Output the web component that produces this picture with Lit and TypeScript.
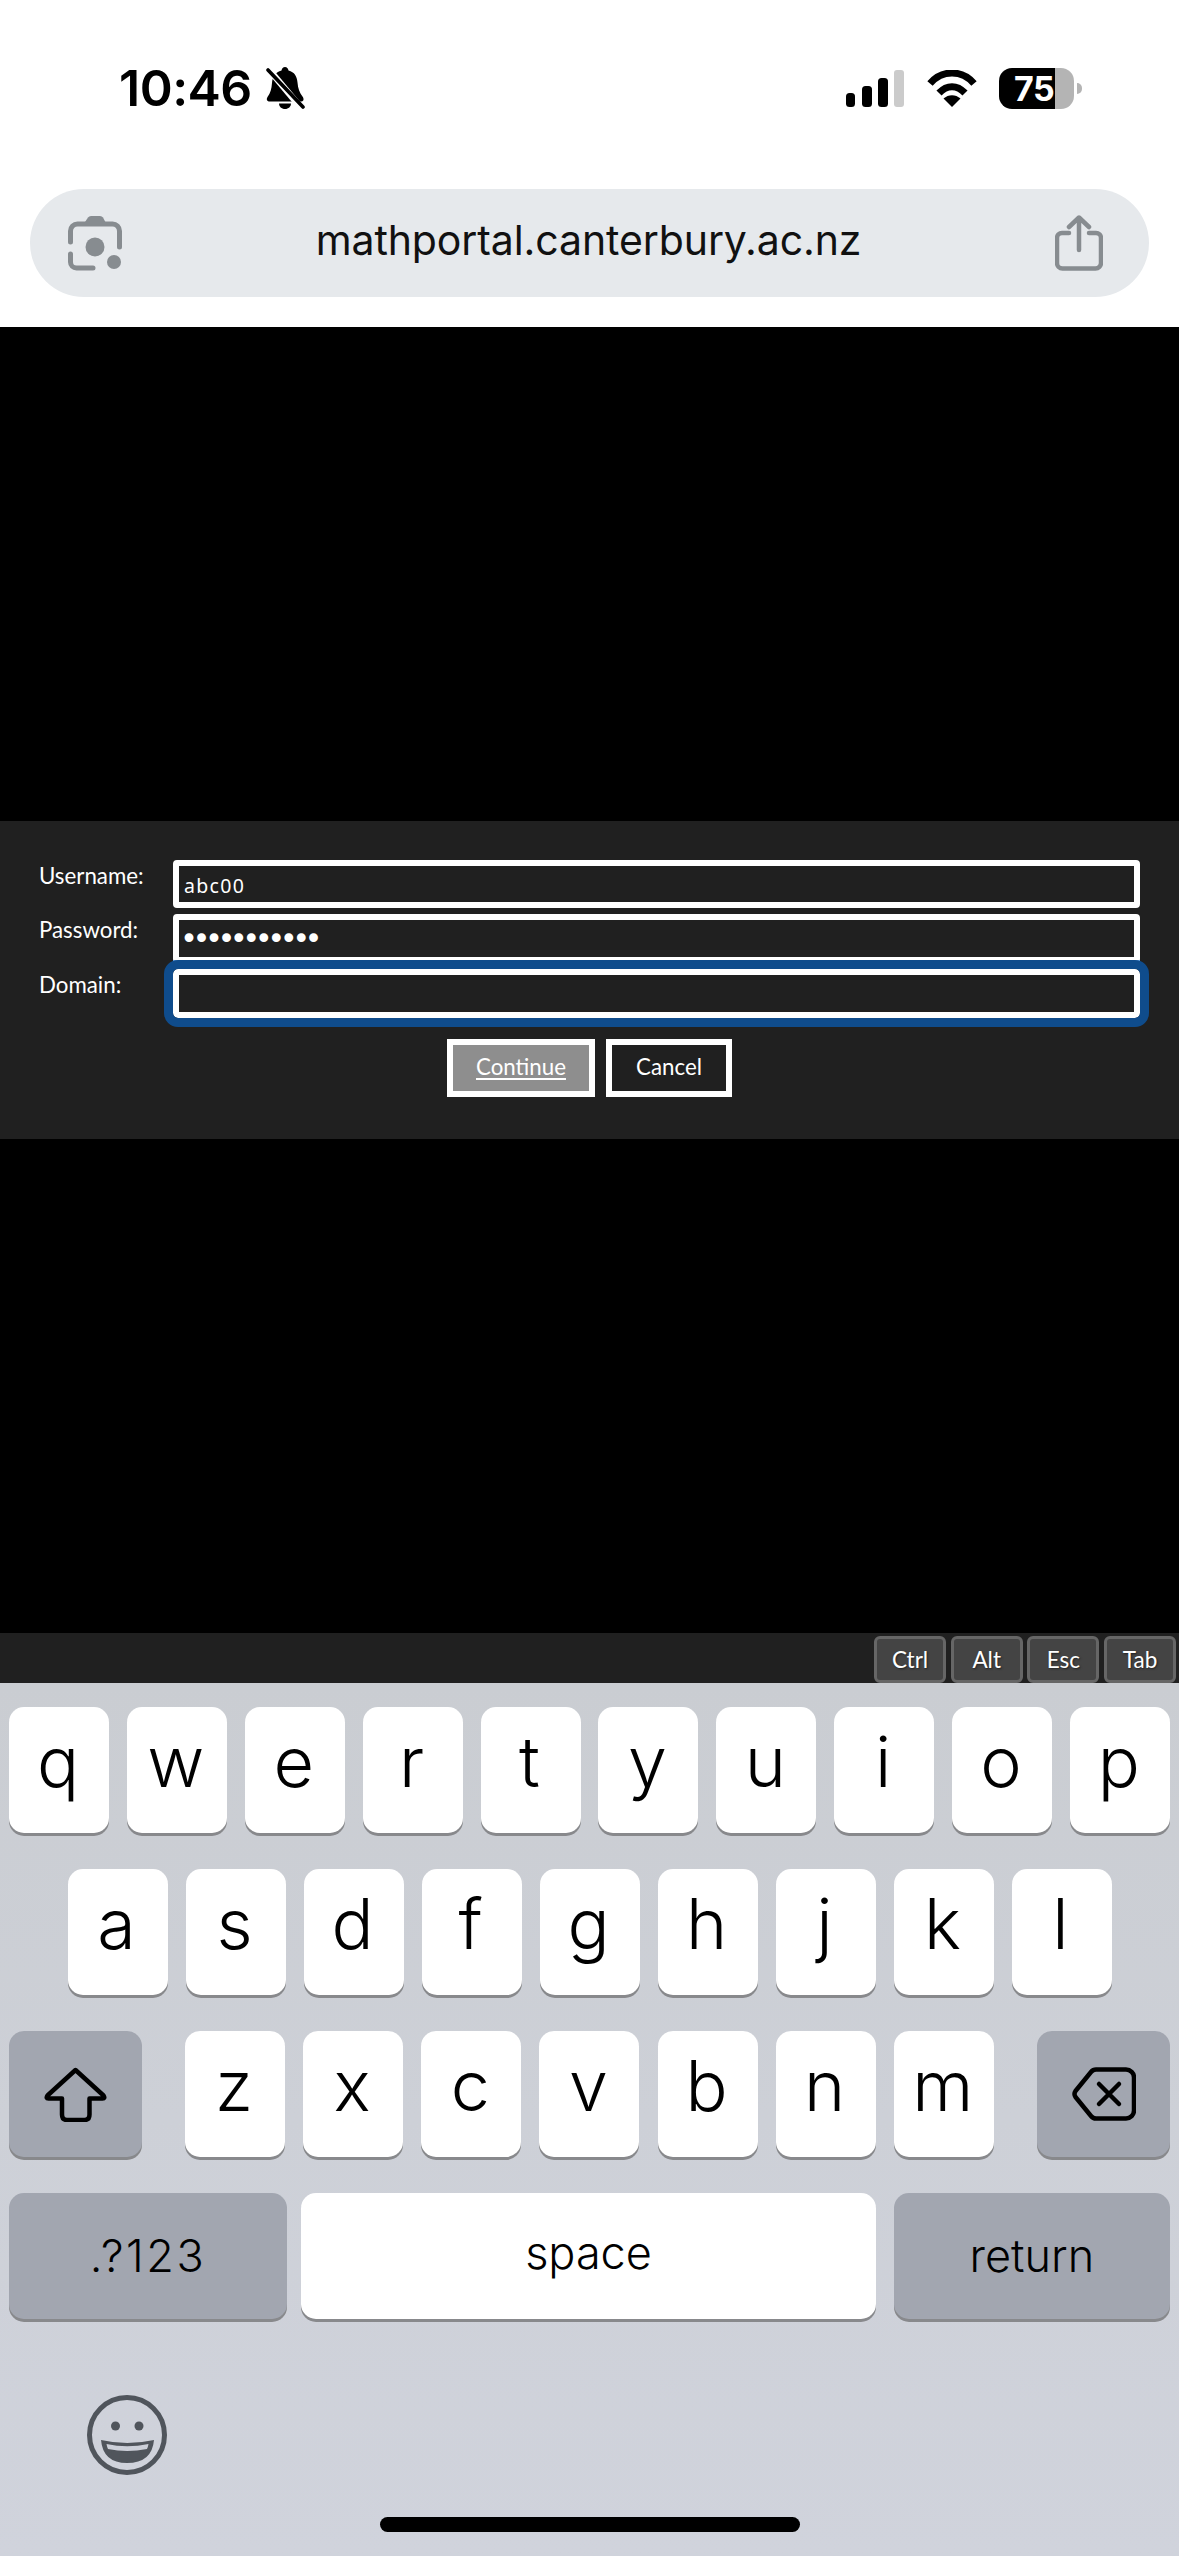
import { LitElement, html, css } from "lit";
import { customElement } from "lit/decorators.js";

const rows = ["qwertyuiop", "asdfghjkl", "zxcvbnm"];

@customElement("app-root")
export class AppRoot extends LitElement {
  static styles = css`
    :host { display: block; width: 1179px; height: 2556px; overflow: hidden; font-family: Inter, "Liberation Sans", sans-serif; background: #fff; }
    * { box-sizing: border-box; }
    .page { display: flex; flex-direction: column; height: 2556px; }
    svg { display: block; flex: none; }

    .top { height: 327px; flex: none; background: #fff; padding-top: 65px; }
    .status { height: 46px; display: flex; align-items: center; padding: 0 97px 0 119px; }
    .time { font-size: 50px; font-weight: 600; line-height: 46px; color: #000; letter-spacing: -0.5px; margin-right: 14px; }
    .bell { width: 39px; height: 42px; }
    .spacer { flex: 1; }
    .signal { width: 58px; height: 37px; margin-right: 23px; }
    .wifi { width: 50px; height: 37px; margin-right: 22px; }
    .battery { width: 75px; height: 41px; border-radius: 13px; background: linear-gradient(90deg, #000 56px, #b4b4b4 56px); color: #fff; font-size: 34px; font-weight: 700; line-height: 41px; padding-left: 15px; letter-spacing: -0.5px; }
    .nub { width: 5px; height: 11px; margin-left: 3px; background: #b4b4b4; border-radius: 0 6px 6px 0; }

    .url { margin: 78px 30px 0; height: 108px; border-radius: 54px; background: #e6e9ec; display: flex; align-items: center; padding: 0 46px 0 38px; }
    .lens { width: 54px; height: 55px; }
    .share { width: 48px; height: 56px; }
    .addr { flex: 1; text-align: center; font-size: 41px; letter-spacing: -0.1px; color: #111; padding-bottom: 6px; }

    .stage { flex: 1; background: #000; display: flex; align-items: center; }
    .panel { width: 100%; height: 318px; background: #202020; padding: 39px 39px 0 39px; color: #fff; font-family: Lato, "Open Sans", sans-serif; }
    .form { display: grid; grid-template-columns: 134px 1fr; row-gap: 6px; }
    .label { font-size: 22.3px; line-height: 32px; color: #fff; }
    .input { height: 49px; border: 6px solid #fff; border-radius: 4px; background: #202020; position: relative; }
    .input.first { height: 48px; }
    .input.under::after { content: ""; position: absolute; left: -6px; right: -6px; bottom: -6px; height: 3px; background: #7ab8f8; }
    .input.focus { outline: 9px solid #0f4c8c; outline-offset: 0; border-radius: 5px; }
    .value { display: block; font-family: "Noto Sans", sans-serif; font-size: 19.5px; letter-spacing: 1.3px; line-height: 39px; padding-left: 5px; color: #fff; }
    .dots { display: block; font-family: "DejaVu Sans Mono", monospace; font-size: 30px; letter-spacing: -5.6px; line-height: 37px; padding-left: 1px; color: #fff; white-space: nowrap; }
    .buttons { display: flex; justify-content: center; gap: 11px; margin-top: 21px; }
    .btn { height: 58px; border: 6px solid #fff; display: flex; align-items: center; justify-content: center; font-size: 22.3px; color: #fff; background: #202020; width: 126px; padding-bottom: 3px; }
    .btn.primary { width: 148px; background: #8e8e8e; text-decoration: underline; text-underline-offset: 3px; }

    .tools { height: 50px; flex: none; background: #202020; display: flex; justify-content: flex-end; align-items: flex-end; gap: 4.67px; padding-right: 3px; font-family: Lato, "Open Sans", sans-serif; }
    .tool { width: 72px; height: 47px; border: 3px solid #666; border-radius: 6px; background: #444; color: #fff; font-size: 22.5px; display: flex; align-items: center; justify-content: center; text-shadow: 1px 1px 2px #222; }

    .kb { height: 873px; flex: none; background: linear-gradient(180deg, #cacdd2, #d0d3dc); padding: 24px 9px 0 9px; position: relative; }
    .row { display: flex; gap: 17.89px; height: 126px; margin-bottom: 36px; }
    .row.mid { justify-content: center; gap: 18px; }
    .row.third { gap: 43px; }
    .group { display: flex; gap: 18.15px; }
    .key { width: 100px; height: 126px; flex: none; border-radius: 15px; background: #fff; box-shadow: 0 3px 0 #88898c; color: #000; display: flex; align-items: center; justify-content: center; font-size: 70px; font-weight: 320; padding: 0 2px 17px 0; }
    .key.fn { background: #a2a6b0; width: 133px; padding: 0; }
    .key.del-key { margin-left: auto; }
    .key.wide { font-size: 45px; width: 278px; font-weight: 320; letter-spacing: 2.5px; padding-bottom: 2px; }
    .key.space { background: #fff; width: 575px; font-size: 45px; font-weight: 320; padding: 0 0 8px; margin-left: -3.89px; }
    .key.ret { width: 276px; font-weight: 340; font-size: 45px; padding-bottom: 2px; }
    .shift { width: 63px; height: 55px; }
    .del { width: 64px; height: 54px; }
    .emoji { width: 80px; height: 80px; position: absolute; left: 87px; top: 712px; }
    .home { position: absolute; left: 380px; top: 834px; width: 420px; height: 15px; border-radius: 8px; background: #000; }
  `;

  render() {
    return html`
      <div class="page">
        <div class="top">
          <div class="status">
            <span class="time">10:46</span>
            <svg class="bell" viewBox="0 0 39 42">
              <path fill="#000" d="M19 0c2 0 3 1.500 3.500 3.500 6 1.500 8.500 6 9 12 .5 6 2 10 5 14 2 3 1 5-2 5H4c-3 0-4-2-2.500-4.500 3-4 4-8 4.500-14C6.500 10 9.500 5 15.500 3.500 16 1.500 17 0 19 0z"/>
              <path fill="#000" d="M13 36.500h12c0 3-2.500 5.500-6 5.500s-6-2.500-6-5.500z"/>
              <path stroke="#fff" stroke-width="6.500" d="M0 -1L36 42"/>
              <path stroke="#000" stroke-width="3.600" stroke-linecap="round" d="M2 3L37 40"/>
            </svg>
            <span class="spacer"></span>
            <svg class="signal" viewBox="0 0 58 37">
              <rect x="0" y="23" width="9" height="14" rx="3.500" fill="#000"/>
              <rect x="16" y="16" width="10" height="21" rx="3.500" fill="#000"/>
              <rect x="32" y="8" width="10" height="29" rx="3.500" fill="#000"/>
              <rect x="48" y="0" width="10" height="37" rx="3" fill="#cbcbcb"/>
            </svg>
            <svg class="wifi" viewBox="0 0 50 37">
              <path fill="none" stroke="#000" stroke-width="7" d="M3 13.500C15-.5 35-.5 47 13.500"/>
              <path fill="none" stroke="#000" stroke-width="7" d="M12 23C20 14.500 30 14.500 38 23"/>
              <path fill="#000" d="M25 37L16.500 28.500C21.500 24 28.500 24 33.500 28.500z"/>
            </svg>
            <div class="battery">75</div>
            <div class="nub"></div>
          </div>
          <div class="url">
            <svg class="lens" viewBox="0 0 54 55">
              <path fill="none" stroke="#878c90" stroke-width="5" stroke-linecap="round" d="M2.500 26V15a7 7 0 0 1 7-7H44.500a7 7 0 0 1 7 7V31"/>
              <path fill="#878c90" d="M15 9L20 1.500Q21 0 23 0H32Q34 0 35 1.500L39 9z"/>
              <path fill="none" stroke="#878c90" stroke-width="5" stroke-linecap="round" d="M2.500 38V46a6 6 0 0 0 6 6H25"/>
              <circle cx="27" cy="31" r="9.500" fill="#878c90"/>
              <circle cx="46" cy="46" r="7" fill="#878c90"/>
            </svg>
            <div class="addr">mathportal.canterbury.ac.nz</div>
            <svg class="share" viewBox="0 0 48 56">
              <path fill="none" stroke="#878c90" stroke-width="4.500" stroke-linecap="round" d="M14 18H7a5 5 0 0 0-5 5V48a5.500 5.500 0 0 0 5.500 5.500H40.500A5.500 5.500 0 0 0 46 48V23a5 5 0 0 0-5-5H34"/>
              <path fill="none" stroke="#878c90" stroke-width="4.500" stroke-linecap="round" stroke-linejoin="round" d="M24 35V3M14 12L24 2.500L34 12"/>
            </svg>
          </div>
        </div>

        <div class="stage">
          <div class="panel">
            <div class="form">
              <div class="label">Username:</div>
              <div class="input first"><span class="value">abc00</span></div>
              <div class="label">Password:</div>
              <div class="input under"><span class="dots">•••••••••••</span></div>
              <div class="label">Domain:</div>
              <div class="input focus"></div>
            </div>
            <div class="buttons">
              <div class="btn primary">Continue</div>
              <div class="btn">Cancel</div>
            </div>
          </div>
        </div>

        <div class="tools">
          ${["Ctrl", "Alt", "Esc", "Tab"].map((t) => html`<div class="tool">${t}</div>`)}
        </div>

        <div class="kb">
          <div class="row">${[...rows[0]].map((k) => html`<div class="key">${k}</div>`)}</div>
          <div class="row mid">${[...rows[1]].map((k) => html`<div class="key">${k}</div>`)}</div>
          <div class="row third">
            <div class="key fn">
              <svg class="shift" viewBox="0 0 63 55">
                <path fill="none" stroke="#000" stroke-width="4.500" stroke-linejoin="round" d="M31.500 3L3.500 28.500Q1.500 31.500 4.500 31.500H18V47.500Q18 53 23 53H40.500Q45.500 53 45.500 47.500V31.500H58.500Q61.500 31.500 59.500 28.500z"/>
              </svg>
            </div>
            <div class="group">${[...rows[2]].map((k) => html`<div class="key">${k}</div>`)}</div>
            <div class="key fn del-key">
              <svg class="del" viewBox="0 0 64 54">
                <path fill="none" stroke="#000" stroke-width="4.500" stroke-linejoin="round" d="M24 2.500H54a8 8 0 0 1 8 8V43.500a8 8 0 0 1-8 8H24Q21 51.500 19 49L3.500 30Q1.500 27 3.500 24L19 5Q21 2.500 24 2.500z"/>
                <path fill="none" stroke="#000" stroke-width="4.500" stroke-linecap="round" d="M27 17L47 37M47 17L27 37"/>
              </svg>
            </div>
          </div>
          <div class="row">
            <div class="key fn wide">.?123</div>
            <div class="key space">space</div>
            <div class="key fn ret">return</div>
          </div>
          <svg class="emoji" viewBox="0 0 80 80">
            <circle cx="40" cy="40" r="37.500" fill="none" stroke="#50555c" stroke-width="5"/>
            <circle cx="28.500" cy="31" r="4.500" fill="#50555c"/>
            <circle cx="52" cy="31" r="4.500" fill="#50555c"/>
            <path fill="#50555c" d="M14 45Q40 51 67 45Q65 68 40 68Q16 68 14 45z"/>
            <path fill="#cdd0d9" d="M19.500 49Q40 53.500 61.500 49Q61 52 60 54Q40 58 21 54Q20 52 19.500 49z"/>
          </svg>
          <div class="home"></div>
        </div>
      </div>
    `;
  }
}
